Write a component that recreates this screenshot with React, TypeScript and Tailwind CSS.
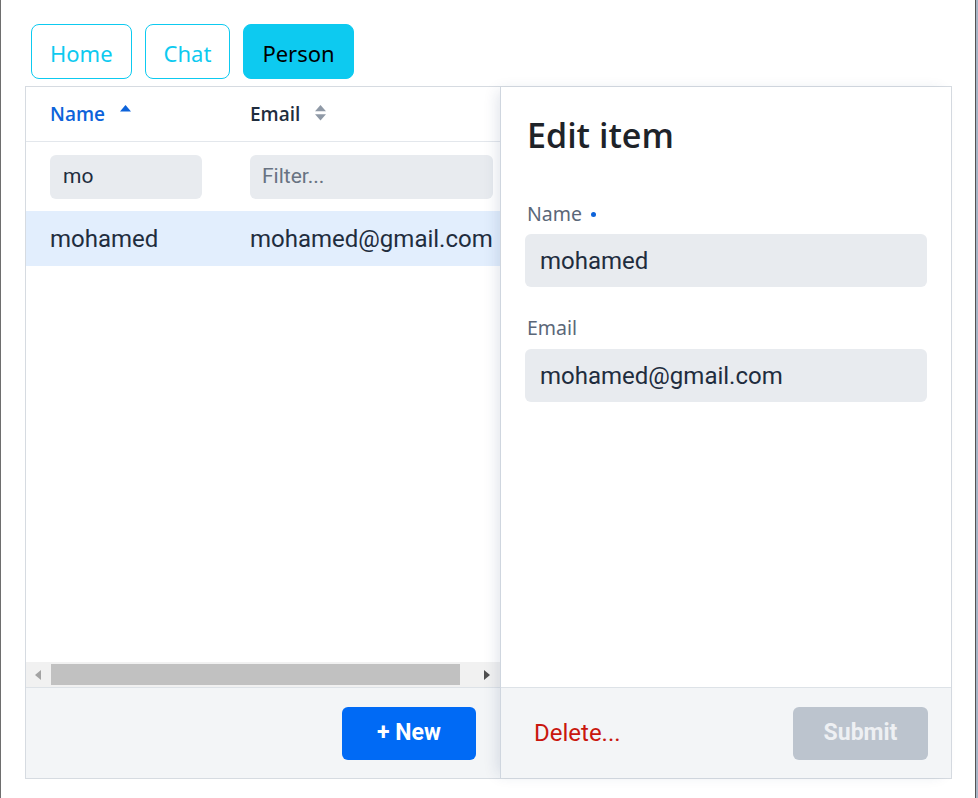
import React from 'react';

type Tab = { label: string; active: boolean };

const tabs: Tab[] = [
  { label: 'Home', active: false },
  { label: 'Chat', active: false },
  { label: 'Person', active: true },
];

const people = [{ name: 'mohamed', email: 'mohamed@gmail.com' }];

// sorter arrows, drawn the same size so both headers line up
const SortIcon: React.FC<{ mode: 'asc' | 'none' }> = ({ mode }) => (
  <svg width="11" height="16" viewBox="0 0 11 16" className="-mt-[3px] ml-[15px]">
    {mode === 'asc' ? (
      <polygon points="5.5,0 11,6.5 0,6.5" fill="#0d63da" />
    ) : (
      <>
        <polygon points="5.5,0 11,6.2 0,6.2" fill="#8f99a6" />
        <polygon points="0,9.2 11,9.2 5.5,15.5" fill="#8f99a6" />
      </>
    )}
  </svg>
);

const App: React.FC = () => {
  return (
    <div className="flex h-[798px] w-[978px] bg-white font-['Roboto',sans-serif] border-l border-[#6e6e6e]">
      <div className="flex flex-1 flex-col pl-[24px] pt-[24px]">
        {/* Tabs */}
        <div className="ml-[6px] flex gap-[13px] font-['Noto_Sans',sans-serif]">
          {tabs.map((tab) => (
            <div
              key={tab.label}
              className={`flex h-[55px] items-center rounded-[8px] border px-[18px] pt-[3px] text-[22px] ${
                tab.active
                  ? 'border-[#0dcaf0] bg-[#0dcaf0] text-black'
                  : 'border-[#0dcaf0] bg-white text-[#0dcaf0]'
              }`}
            >
              {tab.label}
            </div>
          ))}
        </div>

        {/* Crud panel */}
        <div className="mt-[7px] flex h-[693px] w-[927px] border border-[#d6dbe1]">
          {/* Grid */}
          <div className="flex w-[474px] flex-col overflow-hidden">
            <div className="flex h-[55px] shrink-0 items-center border-b border-[#e3e7ec] font-['Open_Sans',sans-serif] text-[19px] font-semibold">
              <div className="flex w-[199px] shrink-0 items-center pl-[24px] text-[#0d63da]">
                Name
                <SortIcon mode="asc" />
              </div>
              <div className="flex shrink-0 items-center pl-[25px] text-[#1f2d3e]">
                Email
                <SortIcon mode="none" />
              </div>
            </div>

            <div className="flex h-[69px] shrink-0 items-center text-[21px]">
              <div className="w-[199px] shrink-0 pl-[24px]">
                <div className="flex h-[44px] w-[152px] items-center rounded-[6px] bg-[#e8ebef] px-[13px] text-[#1f2d3e]">
                  mo
                </div>
              </div>
              <div className="shrink-0 pl-[25px]">
                <div className="flex h-[44px] w-[243px] items-center rounded-[6px] bg-[#e8ebef] px-[12px] text-[#687382]">
                  Filter...
                </div>
              </div>
            </div>

            {people.map((p) => (
              <div key={p.email} className="flex h-[55px] shrink-0 items-center bg-[#e2eefd] text-[24px] text-[#1f2d3e]">
                <div className="w-[199px] shrink-0 pl-[24px]">{p.name}</div>
                <div className="shrink-0 whitespace-nowrap pl-[25px]">{p.email}</div>
              </div>
            ))}

            <div className="flex-1" />

            {/* horizontal scrollbar */}
            <div className="flex h-[25px] shrink-0 items-center bg-[#f1f1f1]">
              <svg width="6" height="10" viewBox="0 0 6 10" className="ml-[9px]">
                <polygon points="6,0 6,10 0,5" fill="#a3a3a3" />
              </svg>
              <div className="ml-[10px] h-[21px] w-[409px] bg-[#c1c1c1]" />
              <svg width="6" height="10" viewBox="0 0 6 10" className="ml-[24px]">
                <polygon points="0,0 6,5 0,10" fill="#505050" />
              </svg>
            </div>

            <div className="flex h-[91px] shrink-0 items-center justify-end border-t border-[#dde2e7] bg-[#f3f5f7] pr-[24px]">
              <button className="h-[53px] w-[134px] rounded-[6px] bg-[#006af5] text-[23px] font-bold text-white">
                + New
              </button>
            </div>
          </div>

          {/* Editor */}
          <div className="relative z-10 flex flex-1 flex-col border-l border-[#cfd6df] shadow-[-6px_0_14px_-4px_rgba(25,59,103,0.14)]">
            <div className="flex-1 bg-white px-[24px] pt-[25px]">
              <h2 className="pl-[2px] font-['Open_Sans',sans-serif] text-[34px] font-semibold leading-[46px] text-[#1e2329]">
                Edit item
              </h2>

              <div className="mt-[41px] flex items-center pl-[2px] font-['Noto_Sans',sans-serif] text-[19.5px] leading-[30px] text-[#5b6778]">
                Name
                <span className="ml-[9px] h-[5px] w-[5px] rounded-full bg-[#0d63da]" />
              </div>
              <div className="mt-[5px] flex h-[53px] items-center rounded-[6px] bg-[#e8ebef] px-[15px] text-[24px] text-[#1f2d3e]">
                mohamed
              </div>

              <div className="mt-[26px] pl-[2px] font-['Noto_Sans',sans-serif] text-[19.5px] leading-[30px] text-[#5b6778]">
                Email
              </div>
              <div className="mt-[6px] flex h-[53px] items-center rounded-[6px] bg-[#e8ebef] px-[15px] text-[24px] text-[#1f2d3e]">
                mohamed@gmail.com
              </div>
            </div>

            <div className="flex h-[91px] shrink-0 items-center justify-between border-t border-[#dde2e7] bg-[#f3f5f7] pl-[33px] pr-[23px]">
              <span className="text-[24px] text-[#c9170e]">Delete...</span>
              <button className="h-[53px] w-[135px] rounded-[6px] bg-[#bcc4ce] text-[23px] font-bold text-[#eef0f3]">
                Submit
              </button>
            </div>
          </div>
        </div>
      </div>
      <div className="w-px bg-[#555555]" />
      <div className="w-[2px] bg-[#a9b5c6]" />
    </div>
  );
};

export default App;
